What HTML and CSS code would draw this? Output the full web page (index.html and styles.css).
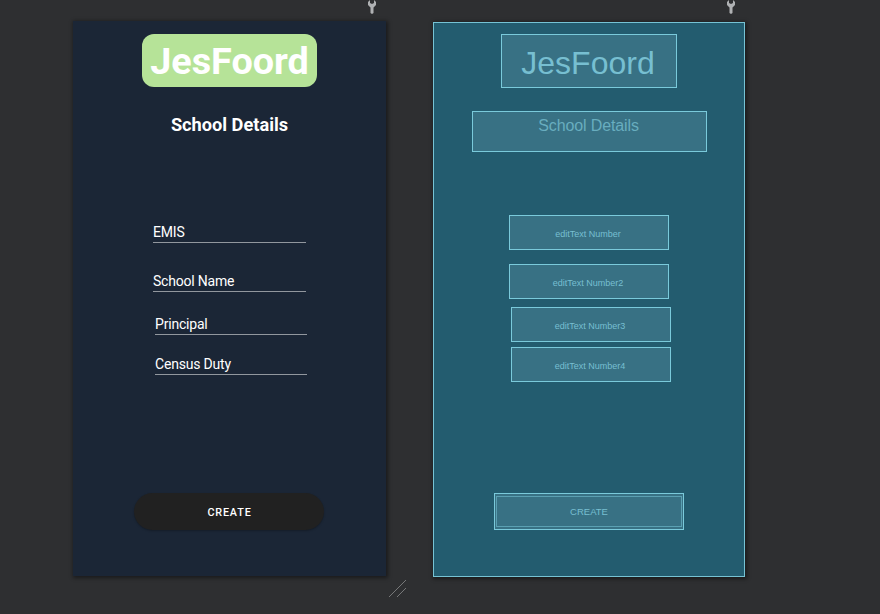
FILE: index.html
```html
<!DOCTYPE html>
<html lang="en">
<head>
<meta charset="utf-8">
<title>Layout editor</title>
<link rel="stylesheet" href="styles.css">
</head>
<body>
<main class="surface">
  <section class="preview">
    <svg class="wrench" viewBox="0 0 8 14"><path d="M2 0v3l2 1 2-1V0l2 2v3L5.500 7.500V13L4 14l-1.500-1V7.500L0 5V2z"/></svg>
    <div class="screen design">
      <div class="logo"><span>JesFoord</span></div>
      <h1 class="heading">School Details</h1>
      <div class="field field-1"><span>EMIS</span></div>
      <div class="field field-2"><span>School Name</span></div>
      <div class="field field-3"><span>Principal</span></div>
      <div class="field field-4"><span>Census Duty</span></div>
      <button class="create">CREATE</button>
    </div>
  </section>
  <section class="preview">
    <svg class="wrench wrench-end" viewBox="0 0 8 14"><path d="M2 0v3l2 1 2-1V0l2 2v3L5.500 7.500V13L4 14l-1.500-1V7.500L0 5V2z"/></svg>
    <div class="screen blueprint">
      <div class="box box-logo"><span>JesFoord</span></div>
      <div class="box box-heading"><span>School Details</span></div>
      <div class="box box-field box-1"><span>editText Number</span></div>
      <div class="box box-field box-2"><span>editText Number2</span></div>
      <div class="box box-field box-3"><span>editText Number3</span></div>
      <div class="box box-field box-4"><span>editText Number4</span></div>
      <div class="box box-create"><div class="inset"><span>CREATE</span></div></div>
    </div>
  </section>
  <svg class="resize" viewBox="0 0 18 18"><path d="M0 17L17 0M8 17l9-9"/></svg>
</main>
</body>
</html>
```

FILE: styles.css
```css
* { box-sizing: border-box; }
body { margin: 0; background: #2e2f31; }
.surface {
  position: relative;
  display: flex;
  gap: 47px;
  width: 880px;
  height: 614px;
  padding-left: 73px;
  overflow: hidden;
}
.preview { display: flex; flex-direction: column; }
.wrench { width: 8px; height: 14px; margin-left: 295px; fill: #afb1b3; flex: none; }
.wrench-end { margin-left: 294px; }
.screen {
  display: flex;
  flex-direction: column;
  align-items: flex-start;
  box-shadow: 1px 1px 4px 1px rgba(0, 0, 0, .45);
}
.screen span { white-space: nowrap; }

.design {
  width: 313px;
  height: 555px;
  margin-top: 7px;
  padding-top: 13px;
  background: #1b2636;
  color: #fff;
  font-family: Roboto, sans-serif;
}
.logo {
  display: flex;
  align-items: center;
  justify-content: center;
  width: 175px;
  height: 53px;
  padding-top: 1px;
  margin-left: 69px;
  border-radius: 12px;
  background: #b6e398;
  font-size: 37.800px;
  font-weight: 700;
}
.heading {
  width: 313px;
  height: 24px;
  margin: 26px 0 0;
  font-size: 18.200px;
  line-height: 24px;
  font-weight: 700;
  text-align: center;
}
.field {
  width: 153px;
  height: 20px;
  margin-left: 80px;
  border-bottom: 1px solid #92979e;
  font-size: 14px;
  line-height: 18px;
  letter-spacing: -.2px;
}
.field-1 { margin-top: 86px; line-height: 19px; }
.field-2 { margin-top: 29px; }
.field-3 { width: 152px; margin: 23px 0 0 82px; }
.field-4 { width: 152px; margin: 20px 0 0 82px; }
.create {
  width: 190px;
  height: 37px;
  margin: 118px 0 0 61px;
  padding: 1px 0 0 1px;
  border: 0;
  border-radius: 19px;
  background: #212121;
  box-shadow: 0 1px 2px rgba(0, 0, 0, .25);
  color: #fff;
  font: 500 10.800px Roboto, sans-serif;
  letter-spacing: .85px;
}

.blueprint {
  width: 312px;
  height: 555px;
  margin-top: 8px;
  padding-top: 11px;
  border: 1px solid #76c3d4;
  background: #235c6f;
  color: #77bfd1;
  font-family: "Liberation Sans", Arial, sans-serif;
}
.box {
  display: flex;
  align-items: center;
  justify-content: center;
  border: 1px solid #7acadb;
  background: #387184;
}
.box-logo { width: 176px; height: 54px; margin-left: 67px; font-size: 32px; }
.box-logo span { position: relative; top: 2px; left: -1px; }
.box-heading {
  width: 235px;
  height: 41px;
  margin: 23px 0 0 38px;
  align-items: flex-start;
  padding: 5px 2px 0 0;
  font-size: 16px;
  letter-spacing: -.12px;
  color: #68adbf;
}
.box-field { width: 160px; height: 35px; margin-left: 75px; padding: 2px 2px 0 0; font-size: 9px; }
.box-1 { margin-top: 63px; }
.box-2 { margin-top: 14px; }
.box-3 { margin: 8px 0 0 77px; }
.box-4 { margin: 5px 0 0 77px; }
.box-create { width: 190px; height: 37px; margin: 111px 0 0 60px; padding: 1px; font-size: 9.500px; }
.inset {
  display: flex;
  align-items: center;
  justify-content: center;
  width: 100%;
  height: 31px;
  border: 1px solid #5ba0b2;
}
.resize {
  position: absolute;
  left: 389px;
  top: 580px;
  width: 18px;
  height: 18px;
  fill: none;
  stroke: #8a8b8c;
  stroke-width: .8;
}
```
